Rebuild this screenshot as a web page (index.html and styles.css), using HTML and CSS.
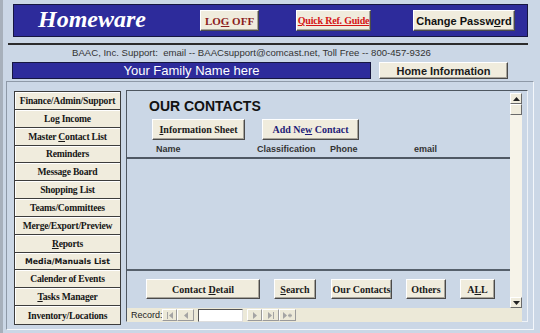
FILE: index.html
```html
<!DOCTYPE html>
<html lang="en">
<head>
  <meta charset="UTF-8">
  <title>Homeware - Our Contacts</title>
  <link rel="stylesheet" href="styles.css">
</head>
<body>
<div class="page">

  <div class="topbar">
    <div class="brand">Homeware</div>
    <div class="btn btn-logoff"><span>LO<u>G</u> OFF</span></div>
    <div class="btn btn-guide"><span><u>Quick Ref. Guide</u></span></div>
    <div class="btn btn-pass"><span>Change Passw<u>o</u>rd</span></div>
  </div>

  <div class="rule"></div>
  <div class="support">BAAC, Inc. Support:&nbsp; email -- BAACsupport@comcast.net, Toll Free -- 800-457-9326</div>

  <div class="family-row">
    <div class="family-name">Your Family Name here</div>
    <div class="btn btn-home"><span>Home Information</span></div>
  </div>

  <div class="main">
    <div class="nav">
      <div class="nav-btn"><span>Finance/Admin/Support</span></div>
      <div class="nav-btn"><span>Log Income</span></div>
      <div class="nav-btn"><span>Master <u>C</u>ontact List</span></div>
      <div class="nav-btn"><span>Reminders</span></div>
      <div class="nav-btn"><span>Message Board</span></div>
      <div class="nav-btn"><span>Shopping List</span></div>
      <div class="nav-btn"><span>Teams/Committees</span></div>
      <div class="nav-btn"><span>Merge/Export/Preview</span></div>
      <div class="nav-btn"><span><u>R</u>eports</span></div>
      <div class="nav-btn nav-sans"><span>Media/Manuals List</span></div>
      <div class="nav-btn"><span>Calender of Events</span></div>
      <div class="nav-btn"><span><u>T</u>asks Manager</span></div>
      <div class="nav-btn"><span>Inventory/Locations</span></div>
    </div>

    <div class="panel">
      <div class="panel-body">
        <h1 class="title">OUR CONTACTS</h1>
        <div class="action-row">
          <div class="btn btn-info"><span><u>I</u>nformation Sheet</span></div>
          <div class="btn btn-add"><span>Add Ne<u>w</u> Contact</span></div>
        </div>
        <div class="col-head">
          <span class="col-name">Name</span>
          <span class="col-class">Classification</span>
          <span class="col-phone">Phone</span>
          <span class="col-email">email</span>
        </div>
        <div class="list"></div>
        <div class="filter-row">
          <div class="btn btn-detail"><span>Contact <u>D</u>etail</span></div>
          <div class="btn btn-search"><span><u>S</u>earch</span></div>
          <div class="btn btn-ours"><span>Our Contacts</span></div>
          <div class="btn btn-others"><span>Others</span></div>
          <div class="btn btn-all"><span>A<u>L</u>L</span></div>
        </div>
      </div>

      <div class="scrollbar">
        <div class="sb-arrow">
          <svg width="7" height="4" viewBox="0 0 7 4"><path d="M0 4 L3.5 0 L7 4 Z" fill="#222"/></svg>
        </div>
        <div class="sb-thumb"></div>
        <div class="sb-track"></div>
        <div class="sb-arrow">
          <svg width="7" height="4" viewBox="0 0 7 4"><path d="M0 0 L3.5 4 L7 0 Z" fill="#222"/></svg>
        </div>
      </div>

      <div class="record-bar">
        <span class="record-label">Record:</span>
        <span class="rec-btn">
          <svg width="8" height="7" viewBox="0 0 8 7"><rect x="1" y="0" width="1" height="7" fill="#a4a4a4"/><path d="M7 0 L3 3.5 L7 7 Z" fill="#a4a4a4"/></svg>
        </span>
        <span class="rec-btn rec-wide">
          <svg width="6" height="7" viewBox="0 0 6 7"><path d="M5 0 L1 3.5 L5 7 Z" fill="#a4a4a4"/></svg>
        </span>
        <span class="rec-input"></span>
        <span class="rec-btn rec-next">
          <svg width="6" height="7" viewBox="0 0 6 7"><path d="M1 0 L5 3.5 L1 7 Z" fill="#a4a4a4"/></svg>
        </span>
        <span class="rec-btn rec-wide">
          <svg width="8" height="7" viewBox="0 0 8 7"><path d="M1 0 L5 3.5 L1 7 Z" fill="#a4a4a4"/><rect x="6" y="0" width="1" height="7" fill="#a4a4a4"/></svg>
        </span>
        <span class="rec-btn rec-wide">
          <svg width="11" height="7" viewBox="0 0 11 7"><path d="M1 0 L5 3.5 L1 7 Z" fill="#a4a4a4"/><path d="M6 3.5 H10 M8 1.5 V5.5 M6.6 2 L9.4 5 M9.4 2 L6.6 5" stroke="#a4a4a4" stroke-width="0.9"/></svg>
        </span>
      </div>
    </div>
  </div>

</div>
</body>
</html>
```

FILE: styles.css
```css
body {
  margin: 0;
  background-color: #cbd7e6;
  font-family: "Liberation Sans", Arial, sans-serif;
  color: #1c1c1c;
}

.page {
  width: 537px;
  height: 333px;
  overflow: hidden;
  border-left: 3px solid #a7b0bb;
}

/* shared 3d button look */
.btn {
  box-sizing: border-box;
  display: flex;
  align-items: center;
  justify-content: center;
  background-color: #f0ecdd;
  border: 1px solid;
  border-color: #ffffff #4a4a4a #4a4a4a #ffffff;
  box-shadow: inset -1px -1px 0 #a8a49a;
  font-family: "Liberation Serif", "Times New Roman", serif;
  font-weight: bold;
  font-size: 10px;
  color: #1a1a1a;
  white-space: nowrap;
}

/* top band */
.topbar {
  box-sizing: border-box;
  display: flex;
  align-items: center;
  height: 33px;
  margin: 4px 12px 0 10px;
  background-color: #2d2b9b;
  border: 1px solid #161640;
}

.brand {
  box-sizing: border-box;
  width: 186px;
  padding-left: 24px;
  font-family: "Liberation Serif", "Times New Roman", serif;
  font-style: italic;
  font-weight: bold;
  font-size: 24px;
  color: #ffffff;
  margin-top: -3px;
}

.btn-logoff {
  width: 59px;
  height: 21px;
  font-size: 11px;
  color: #8a1c1c;
}

.btn-guide {
  width: 75px;
  height: 21px;
  margin-left: 37px;
  color: #d41414;
  letter-spacing: -0.2px;
}

.btn-pass {
  width: 102px;
  height: 21px;
  margin-left: 42px;
  font-family: "Liberation Sans", Arial, sans-serif;
  font-size: 11px;
  color: #111;
}

.rule {
  height: 2px;
  margin: 6px 12px 0 5px;
  background-color: #2c2c2c;
}

.support {
  padding-left: 69px;
  margin-top: 2px;
  font-size: 9.6px;
  line-height: 12px;
  color: #333;
}

.family-row {
  display: flex;
  margin-top: 3px;
  padding-left: 9px;
  height: 17px;
}

.family-name {
  box-sizing: border-box;
  width: 359px;
  background-color: #2d2b9b;
  border: 1px solid #161640;
  color: #ffffff;
  font-size: 13px;
  line-height: 15px;
  text-align: center;
}

.btn-home {
  width: 129px;
  margin-left: 8px;
  font-family: "Liberation Sans", Arial, sans-serif;
  font-size: 11px;
}

/* main frame */
.main {
  display: flex;
  height: 239px;
  margin: 2px 6px 0 3px;
  padding: 8px 5px 0 7px;
  border: 1px solid;
  border-color: #8e99a7 #f4f7fb #f4f7fb #8e99a7;
}

.nav {
  box-sizing: border-box;
  display: grid;
  grid-template-rows: repeat(13, 1fr);
  width: 108px;
  height: 234px;
  margin-top: 1px;
  border: 1px solid #3c3c3c;
  background-color: #3c3c3c;
}

.nav-btn {
  display: flex;
  align-items: center;
  justify-content: center;
  background-color: #f0ecdd;
  border-bottom: 1px solid #3c3c3c;
  box-shadow: inset 1px 1px 0 #ffffff;
  font-family: "Liberation Serif", "Times New Roman", serif;
  font-weight: bold;
  font-size: 9.6px;
  letter-spacing: -0.2px;
  color: #161616;
  white-space: nowrap;
}

.nav-btn:last-child {
  border-bottom: none;
}

.nav-sans {
  font-family: "DejaVu Sans", Verdana, sans-serif;
  font-size: 7.8px;
  letter-spacing: 0;
}

/* contacts panel */
.panel {
  display: grid;
  grid-template-columns: 383px 12px;
  grid-template-rows: 217px 14px;
  margin-left: 5px;
  padding-right: 5px;
  border: 1px solid;
  border-color: #4e5660 #eef2f7 #eef2f7 #4e5660;
  height: 232px;
  box-sizing: border-box;
  width: 402px;
}

.panel-body {
  display: flex;
  flex-direction: column;
}

.title {
  margin: 7px 0 0 22px;
  font-size: 14px;
  line-height: 16px;
  font-weight: bold;
  color: #121212;
}

.action-row {
  display: flex;
  margin: 5px 0 0 25px;
}

.btn-info {
  width: 93px;
  height: 21px;
}

.btn-add {
  width: 97px;
  height: 21px;
  margin-left: 17px;
  color: #1f1c78;
}

.col-head {
  display: flex;
  height: 17px;
  align-items: center;
  padding-left: 29px;
  border-bottom: 2px solid #4f5864;
  font-size: 9px;
  font-weight: bold;
  color: #333;
}

.col-name { width: 101px; }
.col-class { width: 73px; }
.col-phone { width: 84px; }

.list {
  flex: 1;
  border-bottom: 2px solid #56606c;
}

.filter-row {
  display: flex;
  height: 20px;
  margin: 8px 0 9px 19px;
}

.filter-row .btn {
  height: 20px;
}

.btn-detail { width: 114px; }
.btn-search { width: 42px; margin-left: 14px; }
.btn-ours { width: 61px; margin-left: 15px; }
.btn-others { width: 40px; margin-left: 14px; }
.btn-all { width: 35px; margin-left: 14px; }

.scrollbar {
  display: flex;
  flex-direction: column;
  padding-top: 2px;
  background-color: #cbd7e6;
}

.sb-arrow,
.sb-thumb {
  box-sizing: border-box;
  display: flex;
  align-items: center;
  justify-content: center;
  height: 11px;
  background-color: #f0ecdd;
  border: 1px solid;
  border-color: #ffffff #6a6a6a #6a6a6a #ffffff;
}

.sb-track {
  flex: 1;
  background-color: #f6f3e9;
}

.record-bar {
  grid-column: 1 / 3;
  display: flex;
  align-items: center;
  background-color: #ece9d8;
  font-size: 9px;
  color: #222;
}

.record-label {
  margin-left: 4px;
  width: 31px;
}

.rec-btn {
  box-sizing: border-box;
  display: flex;
  align-items: center;
  justify-content: center;
  width: 15px;
  height: 12px;
  border: 1px solid;
  border-color: #ffffff #9a9a9a #9a9a9a #ffffff;
}

.rec-wide {
  width: 17px;
}

.rec-next {
  margin-left: 4px;
}

.rec-input {
  box-sizing: border-box;
  width: 45px;
  height: 13px;
  margin-left: 4px;
  background-color: #ffffff;
  border: 1px solid;
  border-color: #555 #ddd #ddd #555;
}
```
